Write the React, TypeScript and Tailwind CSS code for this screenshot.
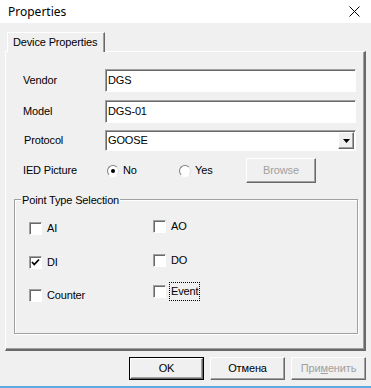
import React from 'react'

const raised = 'border border-t-white border-l-white border-r-[#696969] border-b-[#696969] shadow-[inset_-1px_-1px_0_#a0a0a0]'
const sunken = 'border border-t-[#a0a0a0] border-l-[#a0a0a0] border-r-white border-b-white shadow-[inset_1px_1px_0_#696969]'

function TextField({ label, value }: { label: string; value: string }) {
    return (
        <div className="flex items-center">
            <span className="w-[82px] leading-none">{label}</span>
            <div className={`w-[251px] h-[23px] bg-white flex items-center pl-[2px] ${sunken}`}>{value}</div>
        </div>
    )
}

function Radio({ label, checked, width }: { label: string; checked?: boolean; width: string }) {
    return (
        <div className={`flex items-center ${width}`}>
            <span className="w-[12px] h-[12px] rounded-full bg-white border border-t-[#808080] border-l-[#808080] border-r-[#e3e3e3] border-b-white flex items-center justify-center">
                {checked && <span className="w-[4px] h-[4px] rounded-full bg-black" />}
            </span>
            <span className="ml-[4px]">{label}</span>
        </div>
    )
}

function Check({ label, checked, focused, className }: { label: string; checked?: boolean; focused?: boolean; className: string }) {
    return (
        <div className={`flex items-center h-[13px] ${className}`}>
            <span className={`w-[13px] h-[13px] bg-white flex items-center justify-center ${sunken}`}>
                {checked && (
                    <svg width="9" height="9" viewBox="0 0 9 9">
                        <path d="M1 4 L3.3 6.5 L8 1.5" stroke="#000" strokeWidth="1.8" fill="none" />
                    </svg>
                )}
            </span>
            <span className={`ml-[4px] px-[1px] ${focused ? 'outline outline-1 outline-dotted outline-black' : ''}`}>{label}</span>
        </div>
    )
}

export default function App() {
    return (
        <div className="w-[371px] h-[388px] bg-[#f0f0f0] flex flex-col text-[11px] tracking-[-0.15px] text-black font-['Liberation_Sans',Arial,sans-serif]">
            {/* title bar */}
            <div className="h-[23px] bg-white flex items-center justify-between pl-[8px] pr-[11px]">
                <span className="text-[12px] tracking-normal font-['Noto_Sans',sans-serif]">Properties</span>
                <svg width="11" height="11" viewBox="0 0 11 11">
                    <path d="M0.5 0.5 L10.5 10.5 M10.5 0.5 L0.5 10.5" stroke="#000" strokeWidth="1" />
                </svg>
            </div>

            <div className="px-[5px] pt-[9px]">
                {/* tab */}
                <div className="ml-[2px] w-[98px] h-[20px] -mb-[1px] relative z-10 bg-[#f0f0f0] border-t border-l border-white border-r border-r-[#696969] shadow-[inset_-1px_0_0_#a0a0a0] flex items-center pl-[5px]">
                    Device Properties
                </div>

                {/* tab page */}
                <div className="h-[300px] border border-t-white border-l-white border-r-2 border-b-2 border-r-[#696969] border-b-[#696969] shadow-[inset_-1px_-1px_0_#a0a0a0]">
                    <div className="pl-[17px] pt-[17px] flex flex-col">
                        <TextField label="Vendor" value="DGS" />
                        <div className="mt-[8px]">
                            <TextField label="Model" value="DGS-01" />
                        </div>
                        <div className="mt-[7px] flex items-center">
                            <span className="w-[82px] pl-[1px]">Protocol</span>
                            <div className={`w-[251px] h-[21px] bg-white flex items-center justify-between pl-[2px] pr-[1px] ${sunken}`}>
                                <span>GOOSE</span>
                                <span className={`w-[16px] h-[17px] bg-[#f0f0f0] flex items-center justify-center ${raised}`}>
                                    <svg width="7" height="4" viewBox="0 0 7 4">
                                        <path d="M0 0 H7 L3.5 4 Z" fill="#000" />
                                    </svg>
                                </span>
                            </div>
                        </div>
                        <div className="mt-[7px] flex items-center h-[25px]">
                            <span className="w-[84px]">IED Picture</span>
                            <Radio label="No" checked width="w-[72px]" />
                            <Radio label="Yes" width="w-[67px]" />
                            <div className={`w-[70px] h-[25px] flex items-center justify-center text-[#a0a0a0] ${raised}`}>Browse</div>
                        </div>
                    </div>

                    {/* group box */}
                    <div className="relative ml-[8px] mt-[16px] w-[344px] h-[135px] border border-[#a0a0a0] shadow-[inset_1px_1px_0_white,1px_1px_0_white] flex">
                        <span className="absolute -top-[8px] left-[6px] px-[1px] bg-[#f0f0f0]">Point Type Selection</span>
                        <div className="w-[138px] pl-[14px] pt-[22px] flex flex-col">
                            <Check label="AI" className="" />
                            <Check label="DI" checked className="mt-[21px]" />
                            <Check label="Counter" className="mt-[20px]" />
                        </div>
                        <div className="pt-[20px] flex flex-col">
                            <Check label="AO" className="" />
                            <Check label="DO" className="mt-[21px]" />
                            <Check label="Event" focused className="mt-[18px]" />
                        </div>
                    </div>
                </div>
            </div>

            {/* buttons */}
            <div className="mt-[6px] flex justify-end gap-[6px] pr-[5px]">
                <div className="w-[75px] h-[23px] border border-black">
                    <div className={`w-full h-full flex items-center justify-center ${raised}`}>OK</div>
                </div>
                <div className={`w-[75px] h-[23px] flex items-center justify-center ${raised}`}>Отмена</div>
                <div className={`w-[75px] h-[23px] flex items-center justify-center text-[#a0a0a0] ${raised}`}>
                    <span>При<span className="underline">м</span>енить</span>
                </div>
            </div>

            <div className="mt-auto h-[2px] bg-[#5ea9dd]" />
        </div>
    )
}
